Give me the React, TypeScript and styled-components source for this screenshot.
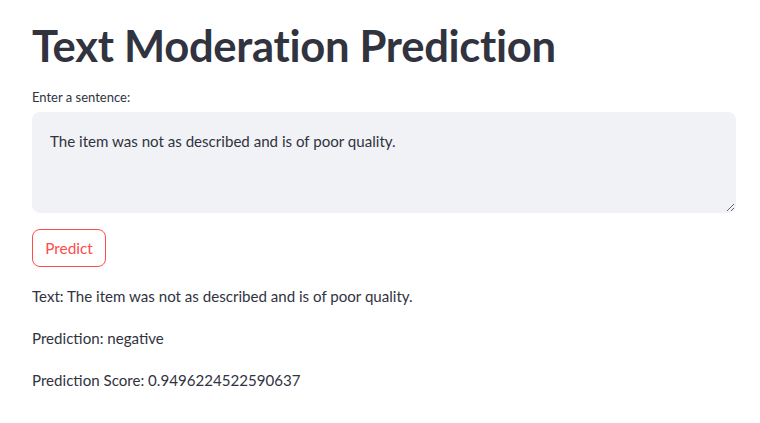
import React from "react";
import styled, { createGlobalStyle } from "styled-components";

const Global = createGlobalStyle`
  html, body { margin: 0; padding: 0; background: #ffffff; }
  body { font-family: "Lato", "Source Sans Pro", sans-serif; color: rgb(49, 51, 63); }
  * { box-sizing: border-box; }
`;

const Main = styled.main`
  padding: 14px 24px 0 32px;
  width: 760px;
  display: flex;
  flex-direction: column;
`;

const Title = styled.h1`
  margin: 0;
  font-size: 43.6px;
  font-weight: 700;
  line-height: 62px;
  letter-spacing: -0.3px;
  color: rgb(49, 51, 63);
`;

const Field = styled.div`
  margin-top: 13px;
  display: flex;
  flex-direction: column;
  gap: 7px;
`;

const Label = styled.label`
  font-size: 13px;
  line-height: 16px;
  color: rgb(49, 51, 63);
`;

const TextArea = styled.textarea`
  width: 704px;
  height: 101px;
  border: 1px solid #f0f2f6;
  border-radius: 8px;
  background: #f0f2f6;
  padding: 16px 17px;
  font-family: inherit;
  font-size: 15.1px;
  line-height: 1.6;
  color: rgb(49, 51, 63);
  resize: vertical;
  outline: none;
`;

const Button = styled.button`
  margin-top: 16px;
  align-self: flex-start;
  height: 38px;
  width: 74px;
  padding: 0;
  border: 1px solid rgb(255, 75, 75);
  border-radius: 8px;
  background: #fff;
  color: rgb(255, 75, 75);
  font-family: inherit;
  font-size: 15.4px;
`;

const Results = styled.div`
  margin-top: 16px;
  display: flex;
  flex-direction: column;
  gap: 16px;
`;

const Para = styled.p`
  margin: 0;
  font-size: 15.1px;
  line-height: 26px;
  color: rgb(49, 51, 63);
`;

export default function App() {
  const sentence = "The item was not as described and is of poor quality.";
  return (
    <>
      <Global />
      <Main>
        <Title>Text Moderation Prediction</Title>
        <Field>
          <Label>Enter a sentence:</Label>
          <TextArea defaultValue={sentence} />
        </Field>
        <Button>Predict</Button>
        <Results>
          <Para>Text: {sentence}</Para>
          <Para>Prediction: negative</Para>
          <Para>Prediction Score: 0.9496224522590637</Para>
        </Results>
      </Main>
    </>
  );
}
